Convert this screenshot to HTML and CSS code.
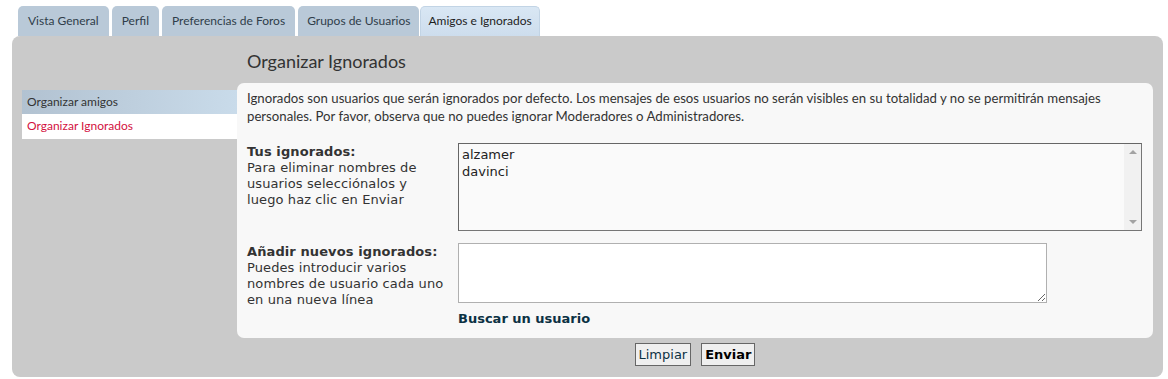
FILE: index.html
```html
<!DOCTYPE html>
<html lang="es">
<head>
    <meta charset="UTF-8">
    <title>Panel de Control - Amigos e Ignorados</title>
    <link rel="stylesheet" href="styles.css">
</head>
<body>

<div class="tabs">
    <a class="tab">Vista General</a>
    <a class="tab">Perfil</a>
    <a class="tab">Preferencias de Foros</a>
    <a class="tab">Grupos de Usuarios</a>
    <a class="tab active">Amigos e Ignorados</a>
</div>

<div class="panel">
    <h2 class="title">Organizar Ignorados</h2>

    <ul class="nav">
        <li class="nav-item">Organizar amigos</li>
        <li class="nav-item current">Organizar Ignorados</li>
    </ul>

    <div class="content">
        <p class="intro">Ignorados son usuarios que serán ignorados por defecto. Los mensajes de esos usuarios no serán visibles en su totalidad y no se permitirán mensajes personales. Por favor, observa que no puedes ignorar Moderadores o Administradores.</p>

        <div class="row">
            <div class="label">
                <b>Tus ignorados:</b><br>
                Para eliminar nombres de usuarios selecciónalos y<br>luego haz clic en Enviar
            </div>
            <div class="listbox">
                <div class="options">
                    <div>alzamer</div>
                    <div>davinci</div>
                </div>
                <div class="scrollbar">
                    <span class="arrow up"></span>
                    <span class="arrow down"></span>
                </div>
            </div>
        </div>

        <div class="row">
            <div class="label">
                <b>Añadir nuevos ignorados:</b><br>
                Puedes introducir varios nombres de usuario cada uno en una nueva línea
            </div>
            <div class="field">
                <textarea class="names"></textarea>
                <a class="search">Buscar un usuario</a>
            </div>
        </div>
    </div>

    <div class="buttons">
        <button class="btn">Limpiar</button>
        <button class="btn primary">Enviar</button>
    </div>
</div>

</body>
</html>
```

FILE: styles.css
```css
body {
    margin: 0;
    background-color: #ffffff;
    font-family: Lato, 'Liberation Sans', sans-serif;
    color: #333333;
}
.tabs {
    display: flex;
    align-items: flex-end;
    gap: 3px;
    padding: 6px 0 0 18px;
    height: 36px;
    box-sizing: border-box;
}
.tab {
    display: flex;
    align-items: center;
    height: 30px;
    box-sizing: border-box;
    padding: 0 10px 2px 10px;
    font-size: 12px;
    color: #2f3d4a;
    background-color: #b9c9d8;
    border-radius: 5px 5px 0 0;
}
.tab:nth-child(4) {
    padding: 0 9px 2px 9px;
}
.tab.active {
    color: #1e1e1e;
    padding: 0 7px 2px 7px;
    background: linear-gradient(#d9e7f4, #cddded);
    border: 1px solid #c2d4e5;
    border-bottom: none;
    margin-left: -2px;
}
.panel {
    display: grid;
    grid-template-columns: 215px 916px;
    grid-template-rows: 37px auto auto;
    margin: 0 5px 0 12px;
    padding: 10px 10px 10px 10px;
    height: 341px;
    box-sizing: border-box;
    background-color: #cacaca;
    border-radius: 8px;
}
.title {
    grid-column: 2;
    grid-row: 1;
    margin: 0;
    padding: 4px 0 0 10px;
    font-size: 18px;
    font-weight: normal;
    color: #333333;
}
.nav {
    grid-column: 1;
    grid-row: 2;
    list-style: none;
    margin: 7px 0 0 0;
    padding: 0;
}
.nav-item {
    height: 24px;
    line-height: 23px;
    padding-left: 5px;
    font-size: 12px;
    color: #333333;
    background: linear-gradient(to right, #b2c2d1, #c9dbea);
}
.nav-item.current {
    height: 25px;
    color: #d31141;
    background: #ffffff;
}
.content {
    grid-column: 2;
    grid-row: 2;
    padding: 6px 11px 11px 10px;
    background-color: #f8f8f8;
    border-radius: 7px;
}
.intro {
    margin: 0 0 18px 0;
    font-size: 13.2px;
    line-height: 18px;
    color: #333333;
}
.row {
    display: flex;
    margin-bottom: 12px;
}
.row:last-child {
    margin-bottom: 0;
}
.label {
    width: 211px;
    font-family: 'DejaVu Sans', Verdana, sans-serif;
    font-size: 13px;
    line-height: 16px;
    letter-spacing: 0.1px;
    color: #333333;
    padding-top: 1px;
}
.label b {
    color: #333333;
}
.listbox {
    display: flex;
    width: 684px;
    height: 88px;
    box-sizing: border-box;
    border: 1px solid #666666;
    border-right-color: #767676;
    border-bottom-color: #767676;
    background-color: #fafafa;
}
.options {
    flex: 1;
    padding: 2px 3px;
    font-family: 'DejaVu Sans', Verdana, sans-serif;
    font-size: 13px;
    line-height: 17px;
    color: #222222;
}
.scrollbar {
    position: relative;
    width: 17px;
    background-color: #f1f1f1;
}
.arrow {
    position: absolute;
    left: 5px;
    width: 0;
    height: 0;
    border-left: 4px solid transparent;
    border-right: 4px solid transparent;
}
.arrow.up {
    top: 6px;
    border-bottom: 4px solid #a3a3a3;
}
.arrow.down {
    bottom: 6px;
    border-top: 4px solid #a3a3a3;
}
.field {
    display: flex;
    flex-direction: column;
}
.names {
    width: 589px;
    height: 60px;
    box-sizing: border-box;
    margin: 0;
    border: 1px solid #b0b0b0;
    background-color: #ffffff;
}
.search {
    margin-top: 8px;
    font-family: 'DejaVu Sans', Verdana, sans-serif;
    font-size: 13px;
    font-weight: bold;
    color: #0b3143;
}
.buttons {
    grid-column: 2;
    grid-row: 3;
    display: flex;
    justify-content: center;
    gap: 10px;
    padding-top: 5px;
}
.btn {
    height: 23px;
    padding: 0 3px;
    font-family: 'DejaVu Sans', Verdana, sans-serif;
    font-size: 13px;
    color: #0b3143;
    background-color: #efefef;
    border: 1px solid #666666;
}
.btn.primary {
    font-weight: bold;
    color: #000000;
}
```
